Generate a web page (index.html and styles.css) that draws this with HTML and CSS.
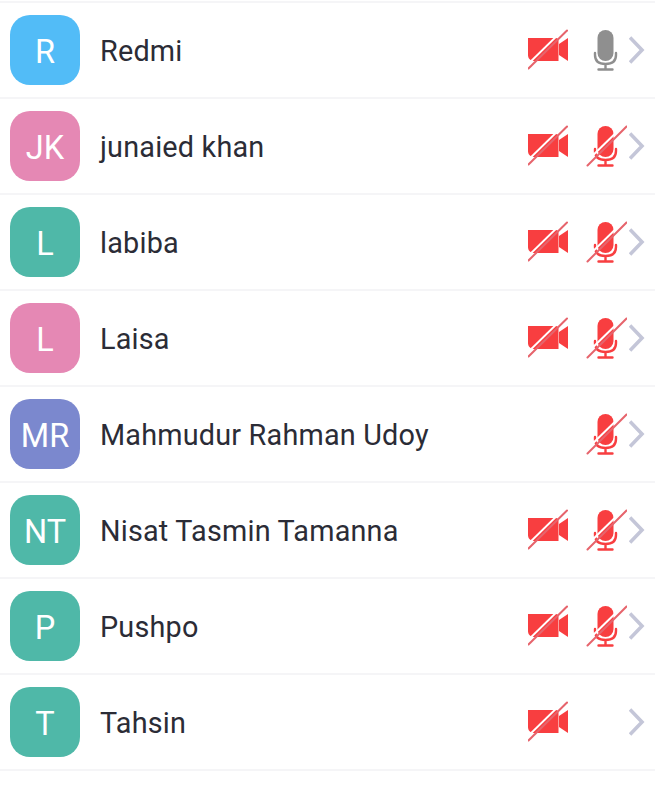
FILE: index.html
```html
<!DOCTYPE html>
<html lang="en">
<head>
<meta charset="utf-8">
<title>Participants</title>
<link rel="stylesheet" href="styles.css">
</head>
<body>
<svg class="defs" width="0" height="0" aria-hidden="true">
  <symbol id="video" viewBox="0 0 42 42">
    <path d="M0 9h28c1.500 0 2.500 1 2.500 2.500v20.500H6c-3.500 0-6-2.500-6-6z" fill="#f83e40"/>
    <path d="M31 15 40 9v23l-9-6z" fill="#f83e40"/>
    <path d="M-2 37 38-2" stroke="#fff" stroke-width="2" fill="none"/>
    <path d="M0.500 39.500 39 1.500" stroke="#e6646c" stroke-width="2" fill="none" stroke-linecap="round"/>
  </symbol>
  <symbol id="mic-on" viewBox="0 0 42 42">
    <rect x="12.500" y="1" width="16" height="31" rx="8" fill="#8f8f8f"/>
    <path d="M10 24v2c0 6 4 9 10.500 9s10.500-3 10.500-9v-2M20.500 35v5M13.500 40.500h14" stroke="#8f8f8f" stroke-width="2.400" fill="none" stroke-linecap="round"/>
  </symbol>
  <symbol id="mic-off" viewBox="0 0 42 42">
    <rect x="12.500" y="1" width="16" height="31" rx="8" fill="#f83e40"/>
    <path d="M10 24v2c0 6 4 9 10.500 9s10.500-3 10.500-9v-2M20.500 35v5M13.500 40.500h14" stroke="#f83e40" stroke-width="2.400" fill="none" stroke-linecap="round"/>
    <path d="M0 38 40-1" stroke="#fff" stroke-width="2" fill="none"/>
    <path d="M2.500 40.500 41.500 1.500" stroke="#e6646c" stroke-width="2" fill="none" stroke-linecap="round"/>
  </symbol>
  <symbol id="chevron" viewBox="0 0 16 28">
    <path d="M1 1.500 13 14 1 26.500" stroke="#c4c6d8" stroke-width="3.600" fill="none"/>
  </symbol>
</svg>
<ul class="list">
  <li class="row"><span class="avatar blue">R</span><span class="name">Redmi</span><span class="status"><svg class="icon"><use href="#video"/></svg><svg class="icon"><use href="#mic-on"/></svg></span><svg class="chevron"><use href="#chevron"/></svg></li>
  <li class="row"><span class="avatar pink">JK</span><span class="name">junaied khan</span><span class="status"><svg class="icon"><use href="#video"/></svg><svg class="icon"><use href="#mic-off"/></svg></span><svg class="chevron"><use href="#chevron"/></svg></li>
  <li class="row"><span class="avatar teal">L</span><span class="name">labiba</span><span class="status"><svg class="icon"><use href="#video"/></svg><svg class="icon"><use href="#mic-off"/></svg></span><svg class="chevron"><use href="#chevron"/></svg></li>
  <li class="row"><span class="avatar pink">L</span><span class="name">Laisa</span><span class="status"><svg class="icon"><use href="#video"/></svg><svg class="icon"><use href="#mic-off"/></svg></span><svg class="chevron"><use href="#chevron"/></svg></li>
  <li class="row"><span class="avatar indigo">MR</span><span class="name">Mahmudur Rahman Udoy</span><span class="status"><span class="icon"></span><svg class="icon"><use href="#mic-off"/></svg></span><svg class="chevron"><use href="#chevron"/></svg></li>
  <li class="row"><span class="avatar teal">NT</span><span class="name">Nisat Tasmin Tamanna</span><span class="status"><svg class="icon"><use href="#video"/></svg><svg class="icon"><use href="#mic-off"/></svg></span><svg class="chevron"><use href="#chevron"/></svg></li>
  <li class="row"><span class="avatar teal">P</span><span class="name">Pushpo</span><span class="status"><svg class="icon"><use href="#video"/></svg><svg class="icon"><use href="#mic-off"/></svg></span><svg class="chevron"><use href="#chevron"/></svg></li>
  <li class="row"><span class="avatar teal">T</span><span class="name">Tahsin</span><span class="status"><svg class="icon"><use href="#video"/></svg><span class="icon"></span></span><svg class="chevron"><use href="#chevron"/></svg></li>
</ul>
</body>
</html>
```
FILE: styles.css
```css
* {
  box-sizing: border-box;
}

html,
body {
  margin: 0;
  background: #ffffff;
}

body {
  font-family: Roboto, "Liberation Sans", sans-serif;
  height: 800px;
  overflow: hidden;
}

.defs {
  display: block;
  height: 0;
}

.list {
  list-style: none;
  margin: 0;
  padding: 3px 0 0;
}

.row {
  display: flex;
  align-items: center;
  height: 96px;
  padding: 0 10px;
  border-bottom: 2px solid #f5f5f7;
}

.row:first-child {
  box-shadow: 0 -2px 0 #f5f5f7;
}

.avatar {
  flex: none;
  width: 70px;
  height: 70px;
  margin-right: 20px;
  padding-top: 3px;
  border-radius: 20px;
  display: flex;
  align-items: center;
  justify-content: center;
  color: #ffffff;
  font-size: 32.500px;
}

.blue { background: #52bcf7; }
.pink { background: #e588b4; }
.teal { background: #4fb8a8; }
.indigo { background: #7b88ce; }

.name {
  flex: 1;
  min-width: 0;
  padding-top: 2px;
  font-size: 28.800px;
  letter-spacing: 0.200px;
  color: #2b2c36;
  white-space: nowrap;
}

.status {
  display: flex;
  gap: 15px;
  margin-right: 2px;
}

.icon {
  display: block;
  width: 42px;
  height: 42px;
}

.chevron {
  flex: none;
  width: 16px;
  height: 28px;
}
```
